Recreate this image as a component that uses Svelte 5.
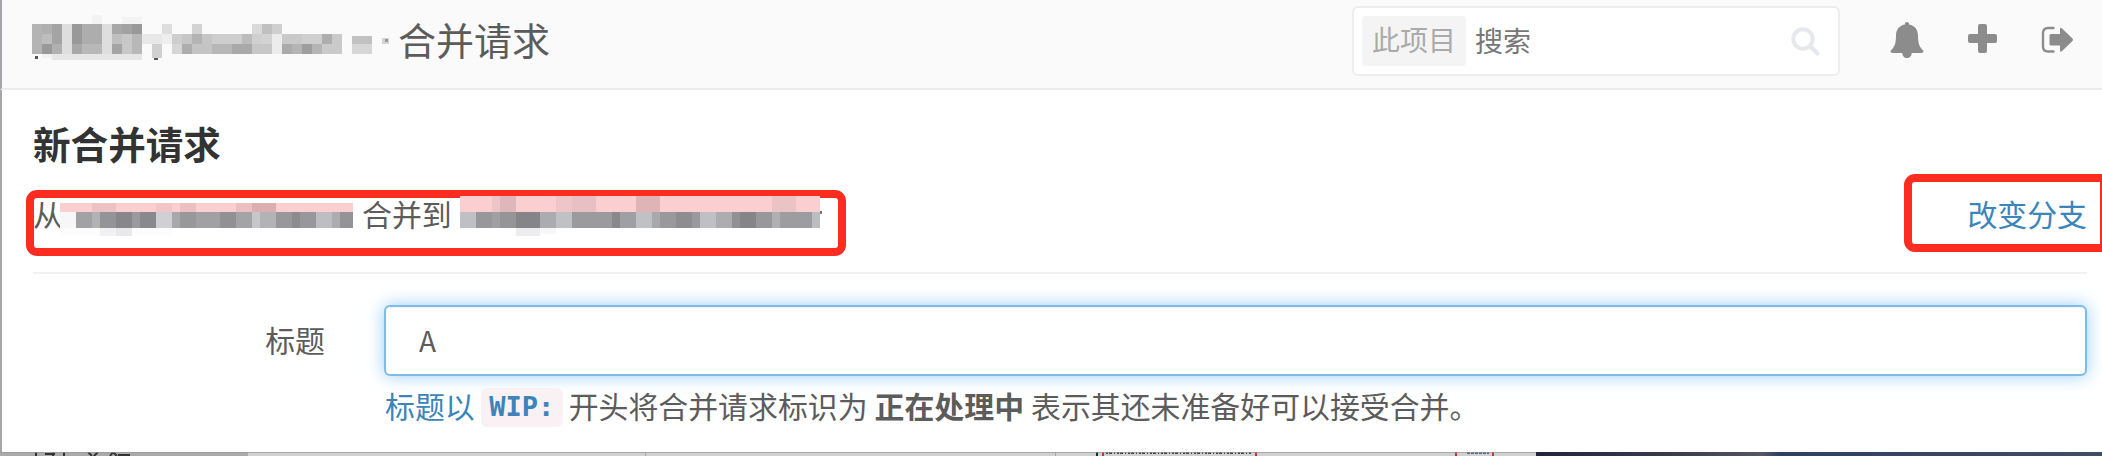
<script>
  // Each cell: [x, y, width, height, colour]
  const titleCells = [
    [0,0,10,30,'#b4b4b4'],[10,0,10,30,'#b0b0b0'],[10,10,10,12,'#bdbdbd'],[10,20,10,10,'#999'],[20,0,10,20,'#a4a4a4'],[20,20,10,10,'#b0b0b0'],
    [30,0,10,30,'#dedede'],[40,0,10,20,'#999'],[40,20,10,10,'#a8a8a8'],[50,0,20,20,'#adadad'],[50,20,20,10,'#b8b8b8'],[70,0,10,30,'#dedede'],
    [80,0,10,10,'#a8a8a8'],[80,10,10,10,'#c0c0c0'],[80,20,10,10,'#a4a4a4'],[90,0,10,10,'#a2a2a2'],[90,10,10,20,'#c8c8c8'],[100,0,10,10,'#999'],[100,10,10,20,'#b8b8b8'],
    [10,30,12,4,'#f1f1f1'],[20,30,90,7,'#e6e6e6'],[50,37,40,3,'#efefef'],
    [60,-9,10,9,'#f3f3f3'],[90,-7,20,7,'#f3f3f3'],[110,10,20,10,'#e8e8e8'],[120,20,10,14,'#d0d0d0'],[130,0,10,10,'#dedede'],[130,10,10,10,'#eee'],
    [140,10,10,10,'#cecece'],[140,20,10,10,'#d6d6d6'],[150,10,10,10,'#c6c6c6'],[150,20,10,10,'#adadad'],[160,0,10,10,'#d3d3d3'],[160,10,10,10,'#b4b4b4'],[160,20,20,10,'#c4c4c4'],
    [170,10,10,10,'#c6c6c6'],[180,10,30,10,'#cecece'],[180,20,20,10,'#b7b7b7'],[200,20,20,10,'#a9a9a9'],[210,10,10,10,'#bcbcbc'],[220,0,10,10,'#dadada'],[220,10,10,10,'#d0d0d0'],[220,20,20,10,'#c7c7c7'],
    [230,0,10,10,'#c0c0c0'],[230,10,10,10,'#d3d3d3'],[240,0,10,10,'#cfcfcf'],[240,10,10,20,'#ececec'],
    [250,10,20,10,'#c9c9c9'],[250,20,10,10,'#aaa'],[260,20,10,10,'#b4b4b4'],[270,10,20,10,'#cfcfcf'],[270,20,10,10,'#9e9e9e'],[280,20,10,10,'#b5b5b5'],
    [290,10,10,10,'#aeaeae'],[290,20,20,10,'#cacaca'],[300,10,10,10,'#cacaca'],[320,12,20,8,'#c1c1c1'],[320,20,20,10,'#d6d6d6'],
    [350,14,7,6,'#d4d4d4'],[353,15,3,3,'#999'],[3,32,3,3,'#555'],[122,34,4,3,'#555']
  ];
  // Each cell: [x, width, colour]
  const sourcePink = [[0,293,'#fbcfd0'],[32,24,'#ecc2c4'],[96,16,'#f2c6c8'],[120,16,'#ecc0c3'],[176,16,'#ecc0c3'],[192,24,'#dcaeb0']];
  const sourceGrey = [[0,16,'#f7f7f8'],[16,16,'#a2a2a4'],[32,8,'#b2b2b4'],[40,16,'#949498'],[56,16,'#87878a'],[72,8,'#9a9a9d'],[80,16,'#89898d'],[96,16,'#d0d0d4'],[112,8,'#a8a8ab'],[120,16,'#98989b'],[136,24,'#a1a1a4'],[160,16,'#919194'],[176,16,'#a4a4a7'],[192,8,'#c7c7ca'],[200,16,'#b3b3b6'],[216,16,'#98989b'],[232,8,'#8b8b8e'],[240,16,'#98989b'],[256,16,'#bebec2'],[272,8,'#adadb0'],[280,13,'#949497']];
  const targetPink = [[0,360,'#fbcfd0'],[32,8,'#edc5c8'],[40,16,'#dfb7ba'],[96,16,'#efc5c8'],[112,24,'#e8bfc2'],[176,24,'#dfb4b7'],[312,24,'#ecc3c5']];
  const targetGrey = [[0,16,'#bfc0c3'],[16,16,'#98989b'],[32,8,'#a0a0a3'],[40,16,'#959598'],[56,24,'#858488'],[80,16,'#acacaf'],[96,16,'#c0c1c4'],[112,40,'#9b9b9e'],[152,8,'#89898c'],[160,16,'#a0a0a3'],[176,16,'#c0c1c4'],[192,8,'#a9a9ac'],[200,16,'#99999c'],[216,16,'#8d8c8f'],[232,8,'#9a9a9d'],[240,16,'#c0c0c4'],[256,16,'#adadb0'],[272,8,'#919194'],[280,16,'#858487'],[296,16,'#98989b'],[312,8,'#b0b0b3'],[320,32,'#9d9da0'],[352,8,'#bcbdc0']];
</script>

<div class="page">
  <header>
    <svg class="name" width="362" height="60" viewBox="0 -24 362 60" shape-rendering="crispEdges">
      {#each titleCells as [x, y, w, h, fill]}<rect {x} {y} width={w} height={h} {fill} />{/each}
    </svg>
    <h1>合并请求</h1>
    <div class="search">
      <span class="tag">此项目</span>
      <span class="placeholder">搜索</span>
      <svg class="find" width="29" height="29" viewBox="0 0 29 29"><circle cx="12" cy="12" r="9.7" fill="none" stroke="#e6e8ee" stroke-width="4" /><path d="M19 19l7.500 7.500" stroke="#e6e8ee" stroke-width="4.200" stroke-linecap="round" /></svg>
    </div>
    <nav>
      <svg width="34" height="37" viewBox="0 0 34 37"><path fill="#8c8c8c" d="M17 0c1.400 0 2.300 1 2.100 2.500C25 3.600 28 8 28 13.500c0 8 1.500 12 5.500 15.200 0 1.300-.8 2.300-2.200 2.300h-9.600c0 2.900-2 5-4.700 5s-4.700-2.100-4.700-5H2.700C1.300 31 .5 30 .5 28.700 4.500 25.500 6 21.500 6 13.500 6 8 9 3.600 14.900 2.500 14.700 1 15.600 0 17 0z" /></svg>
      <svg class="plus" width="29" height="29" viewBox="0 0 29 29"><path fill="#8c8c8c" d="M12 0h5q2 0 2 2v8h8q2 0 2 2v5q0 2-2 2h-8v8q0 2-2 2h-5q-2 0-2-2v-8H2q-2 0-2-2v-5q0-2 2-2h8V2q0-2 2-2z" /></svg>
      <svg width="33" height="28" viewBox="0 0 33 28"><path fill="none" stroke="#8c8c8c" stroke-width="2.400" stroke-linecap="round" d="M12.500 2H7Q2 2 2 7v13.500q0 5 5 5h5.500" /><path fill="#8c8c8c" d="M10 8h9V3q0-2 1.800-.8L31.500 12.500q1 1.200 0 2.400L20.800 25.300Q19 26.500 19 24.500v-5h-9q-1.500 0-1.500-1.500V9.500Q8.500 8 10 8z" /></svg>
    </nav>
  </header>

  <main>
    <h2>新合并请求</h2>
    <div class="branches">
      <span class="from">从</span>
      <svg class="source" width="293" height="42" viewBox="0 0 293 42" shape-rendering="crispEdges">
        {#each sourcePink as [x, w, fill]}<rect {x} y="9" width={w} height="9" {fill} />{/each}
        {#each sourceGrey as [x, w, fill]}<rect {x} y="18" width={w} height="16" {fill} />{/each}
        <rect x="0" y="34" width="112" height="7" fill="#fcfcfc" /><rect x="40" y="34" width="16" height="8" fill="#f1f0f4" /><rect x="56" y="34" width="16" height="8" fill="#e8e8ed" />
      </svg>
      <span>合并到</span>
      <svg class="target" width="362" height="42" viewBox="0 0 362 42" shape-rendering="crispEdges">
        {#each targetPink as [x, w, fill]}<rect {x} y="2" width={w} height="16" {fill} />{/each}
        {#each targetGrey as [x, w, fill]}<rect {x} y="18" width={w} height="16" {fill} />{/each}
        <rect x="56" y="34" width="24" height="8" fill="#ededf0" /><rect x="80" y="34" width="16" height="6" fill="#f7f7f9" /><rect x="360" y="17" width="2" height="3" fill="#777" />
      </svg>
      <a class="change" href="#branches">改变分支</a>
      <i class="mark left"></i>
      <i class="mark right"></i>
    </div>

    <div class="field">
      <label for="title">标题</label>
      <div class="control">
        <input id="title" value="A" />
        <p><span class="blue">标题以</span><code>WIP:</code><span>开头将合并请求标识为</span><strong>正在处理中</strong><span>表示其还未准备好可以接受合并。</span></p>
      </div>
    </div>
  </main>

  <svg class="strip" width="2102" height="4" viewBox="0 0 2102 4">
    <defs><linearGradient id="sky"><stop offset="0" stop-color="#22253a" /><stop offset=".25" stop-color="#3b3c4e" /><stop offset=".4" stop-color="#555664" /><stop offset=".43" stop-color="#30405f" /><stop offset="1" stop-color="#414d65" /></linearGradient></defs>
    <rect width="2102" height="4" fill="#d0d0d0" /><rect width="248" height="4" fill="#aaa" />
    <path d="M36 0v4M64 0v4M45 2h10M53 0v4M88 0l4 4M98 0l-4 4M110 4l3-4l4 4M118 3h12" stroke="#333" stroke-width="2" fill="none" />
    <path d="M645.500 0v4M1055.500 0v4" stroke="#aaa" />
    <path d="M1097 0v4" stroke="#20273a" stroke-width="2" />
    <path d="M1103 0v4M1256 0v4M1456 0v4M1493 0v4" stroke="#c43338" stroke-width="2" />
    <path d="M1106 1h146" stroke="#444" stroke-width="2" stroke-dasharray="2 1 3 2 1 2" /><path d="M1467 1h22" stroke="#568" stroke-width="2" stroke-dasharray="3 1" />
    <rect x="1536" width="566" height="4" fill="url(#sky)" />
    <rect width="1536" height="1" fill="#999" opacity=".7" />
  </svg>
</div>

<style>
  :global(body) { margin: 0; overflow: hidden; background: #fff; }
  .page, .page :global(*) { box-sizing: border-box; }
  .page { width: 2102px; height: 456px; display: flex; flex-direction: column; font: 29.9px/42px "Noto Sans CJK SC", sans-serif; color: #5c5c5c; background: #fff; }
  header { height: 90px; flex: none; display: flex; align-items: flex-start; background: #fafafa; border-bottom: 2px solid #ebebeb; border-left: 2px solid #a6a6aa; padding-left: 30px; }
  svg { display: block; flex: none; }
  h1 { margin: 11px 0 0 4px; width: 154px; font-size: 38px; line-height: 56px; font-weight: 400; color: #5c5c5c; white-space: nowrap; }
  .search { margin: 6px 0 0 800px; width: 488px; height: 70px; border: 2px solid #ededed; border-radius: 6px; background: #fff; display: flex; align-items: center; padding: 0 18px 0 8px; font-size: 28px; }
  .tag { width: 104px; height: 50px; line-height: 47px; text-align: center; background: #f4f4f4; border-radius: 4px; color: #aaa; }
  .placeholder { margin-left: 9px; padding-bottom: 2px; color: #777; }
  .find { margin-left: auto; }
  nav { display: flex; align-items: center; height: 80px; margin-left: 50px; gap: 44px; }
  .plus { margin-top: -3px; }
  main { height: 362px; flex: none; border-left: 2px solid #a6a6aa; padding: 25px 15px 0 31px; }
  h2 { margin: 0; font-size: 37.600px; line-height: 56px; font-weight: 700; color: #333; }
  .branches { position: relative; height: 103px; border-bottom: 2px solid #f1f1f1; display: flex; align-items: flex-start; padding-top: 23px; }
  .branches span, .change { margin-top: -2px; white-space: nowrap; }
  .from { margin-right: -2.900px; }
  .source { margin-right: 9px; position: relative; }
  .target { margin-left: 8px; position: relative; z-index: 1; }
  .change { margin-left: auto; color: #3b85bb; text-decoration: none; }
  .mark { position: absolute; border: 8px solid #fc2c20; border-radius: 11px; }
  .left { left: -7px; top: 19px; width: 820px; height: 66px; }
  .right { left: 1871px; top: 3px; width: 204px; height: 78px; border-radius: 11px 5px 5px 11px; }
  .field { display: flex; padding-top: 31px; }
  label { width: 292px; padding-top: 13px; text-align: right; }
  .control { flex: 1; margin-left: 59px; }
  input { display: block; width: 100%; height: 71px; border: 2px solid #7fbcea; border-radius: 6px; outline: 0; box-shadow: 0 0 17px rgba(110, 185, 245, .7), inset 0 1px 2px rgba(0, 0, 0, .06); padding: 0 33px 2px; font: 28px "Noto Sans CJK SC", sans-serif; color: #5c5c5c; background: #fff; }
  p { margin: 8px 0 0 1px; display: flex; white-space: nowrap; }
  .blue { color: #3b85bb; }
  code { margin: 4px 6px 0; width: 82px; height: 39px; line-height: 38px; text-align: center; border-radius: 6px; background: #f9f1f3; color: #3b85bb; font-family: "DejaVu Sans Mono", monospace; font-size: 27px; font-weight: 700; }
  strong { margin: 0 7px; font-weight: 700; }
  .strip { height: 4px; }
</style>
